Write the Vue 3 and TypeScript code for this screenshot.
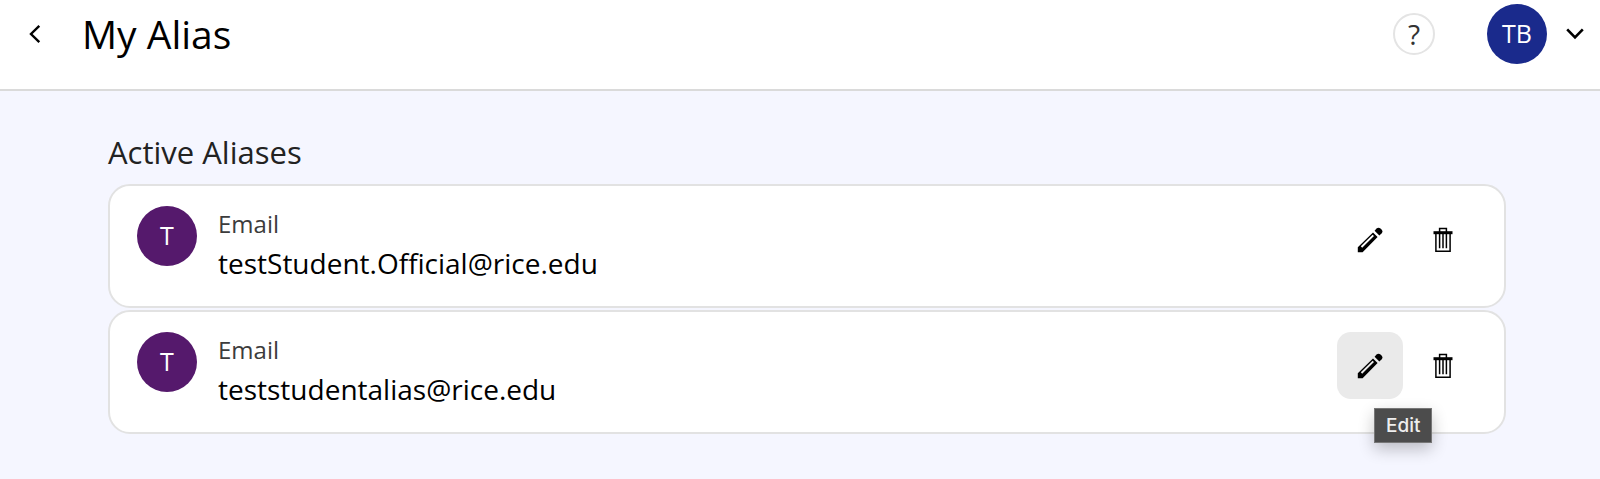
<script setup lang="ts">
interface Alias {
  initial: string
  label: string
  address: string
  editing: boolean
}

const aliases: Alias[] = [
  { initial: 'T', label: 'Email', address: 'testStudent.Official@rice.edu', editing: false },
  { initial: 'T', label: 'Email', address: 'teststudentalias@rice.edu', editing: true },
]
</script>

<template>
  <div class="page">
    <header class="header">
      <button class="back" type="button" aria-label="Back">
        <svg width="12" height="20" viewBox="0 0 12 20"><path d="M10.3 1.8 2 10l8.3 8.2" /></svg>
      </button>
      <h1 class="title">My Alias</h1>
      <button class="help" type="button" aria-label="Help">?</button>
      <button class="account" type="button" aria-label="Account menu">
        <span class="avatar avatar-user">TB</span>
        <svg width="20" height="14" viewBox="0 0 20 14"><path d="M2.2 2.4 10 10.4l7.8-8" /></svg>
      </button>
    </header>

    <main class="content">
      <h2 class="section-title">Active Aliases</h2>
      <ul class="list">
        <li v-for="alias in aliases" :key="alias.address" class="card">
          <span class="avatar avatar-alias">{{ alias.initial }}</span>
          <div class="info">
            <span class="label">{{ alias.label }}</span>
            <span class="address">{{ alias.address }}</span>
          </div>
          <div class="actions">
            <div class="action">
              <button class="icon-button" :class="{ hovered: alias.editing }" type="button" aria-label="Edit alias">
                <svg width="26" height="26" viewBox="0 0 26 26">
                  <path
                    fill-rule="evenodd"
                    d="M.8 25.2v-5L16 5.4l4.6 4.5L5.6 25.2zM3.8 19.3l1.4 1.4L17 9.1l-1.4-1.4z"
                  />
                  <path d="m17.6 3.8 1.9-2.2a2.9 2.9 0 0 1 4 0l1 1a2.9 2.9 0 0 1 0 4l-2.2 1.9z" />
                </svg>
              </button>
              <span v-if="alias.editing" class="tooltip" role="tooltip">Edit</span>
            </div>
            <button class="icon-button" type="button" aria-label="Delete alias">
              <svg width="20" height="26" viewBox="0 0 20 26">
                <path d="M.5 4.2h19v3H.5z" />
                <path class="outline" d="M6.6 5V1.6h6.8V5M2.9 7v17.2h14.2V7M6.6 7v14.3M10 7v14.3M13.4 7v14.3" />
              </svg>
            </button>
          </div>
        </li>
      </ul>
    </main>
  </div>
</template>

<style>
body {
  background: #f5f6ff;
}
</style>

<style scoped>
.page {
  box-sizing: border-box;
  min-height: 100vh;
  background: #f5f6ff;
  color: #000;
  font-family: 'Open Sans', 'Noto Sans', sans-serif;
}

button {
  padding: 0;
  border: 0;
  background: none;
  color: inherit;
  font: inherit;
  cursor: pointer;
}

svg {
  display: block;
}

.header {
  display: flex;
  align-items: center;
  padding: 4px 15px 25px 18px;
  border-bottom: 2px solid #dadada;
  background: #fff;
}

.back {
  display: flex;
  align-items: center;
  justify-content: center;
  width: 34px;
  height: 44px;
}

.back path,
.account path {
  fill: none;
  stroke: #000;
  stroke-width: 2.4;
}

.account path {
  stroke-width: 2.6;
}

.title {
  margin: 0 auto 0 30px;
  font-size: 39px;
  font-weight: 400;
  line-height: 60px;
}

.help {
  box-sizing: border-box;
  width: 42px;
  height: 42px;
  margin-right: 52px;
  border: 2px solid #e4e4e4;
  border-radius: 50%;
  color: #333;
  font-size: 28px;
  line-height: 38px;
}

.account {
  display: flex;
  align-items: center;
  gap: 18px;
}

.avatar {
  flex: none;
  width: 60px;
  height: 60px;
  border-radius: 50%;
  color: #fff;
  font-size: 25px;
  font-weight: 500;
  line-height: 58px;
  text-align: center;
}

.avatar-user {
  background: #1a2a8c;
}

.avatar-alias {
  background: #55196c;
}

.content {
  padding: 39px 94px 44px 108px;
}

.section-title {
  margin: 0 0 10px;
  color: #222;
  font-size: 31px;
  font-weight: 400;
  line-height: 44px;
}

.list {
  display: flex;
  flex-direction: column;
  gap: 2px;
  margin: 0;
  padding: 0;
  list-style: none;
}

.card {
  display: flex;
  align-items: flex-start;
  padding: 20px 28px 20px 27px;
  border: 2px solid #e2e2e2;
  border-radius: 22px;
  background: #fff;
}

.info {
  display: flex;
  flex-direction: column;
  flex: 1;
  margin-left: 21px;
  padding-bottom: 2px;
}

.label {
  color: #3c3c3c;
  font-size: 24px;
  line-height: 36px;
}

.address {
  font-size: 28px;
  line-height: 42px;
}

.actions {
  display: flex;
  gap: 7px;
}

.action {
  position: relative;
}

.icon-button {
  display: flex;
  align-items: center;
  justify-content: center;
  width: 66px;
  height: 67px;
  border-radius: 14px;
}

.hovered {
  background: #eaeaea;
}

.outline {
  fill: none;
  stroke: #000;
  stroke-width: 1.5;
}

.tooltip {
  position: absolute;
  top: 76px;
  left: 37px;
  padding: 0 11px;
  border: 1px solid #777;
  background: #4c4c4c;
  box-shadow: 0 6px 16px rgba(0, 0, 0, 0.24);
  color: #eee;
  font-family: Inter, sans-serif;
  font-size: 19px;
  font-weight: 500;
  line-height: 33px;
}
</style>
